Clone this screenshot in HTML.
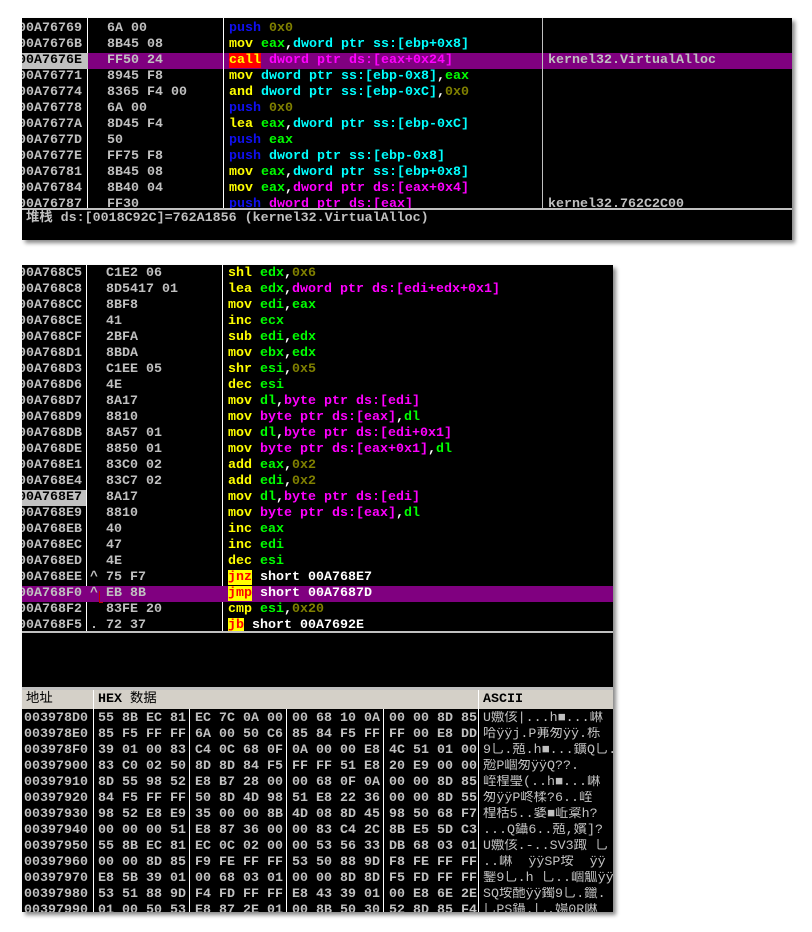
<!DOCTYPE html>
<html><head><meta charset="utf-8"><style>
body{margin:0;width:812px;height:932px;background:#fff;position:relative;overflow:hidden;font-family:"Liberation Mono","Noto Sans CJK SC",monospace;font-weight:bold;font-size:13.33px}
.win{position:absolute;background:#000;overflow:hidden;box-shadow:3px 3px 4px #888}
.r{position:absolute;left:0;right:0;height:16px;line-height:16px;white-space:pre;color:#c0c0c0}
.r span{position:absolute;top:0}
.vl{position:absolute;width:1px;background:#fff}
.y{color:#ffff00}.b{color:#1010f0}.g{color:#00ff00}.c{color:#00ffff}.m{color:#ff00ff}.o{color:#808000}.w{color:#fff}
.j{color:#ff0000;background:#ffff00}
.sel{background:#800080}
.hd{position:absolute;background:#d4d0c8;color:#000;height:19px;line-height:19px;white-space:pre}
</style></head><body>

<div class="win" style="left:22px;top:18px;width:770px;height:222px">
 <div class="vl" style="left:65px;top:0;height:191px"></div>
 <div class="vl" style="left:201px;top:0;height:191px"></div>
 <div class="vl" style="left:520px;top:0;height:191px;background:#c0c0c0"></div>
 <div class="r" style="top:3px"><span style="left:-4px">00A76769</span><span style="left:85px">6A 00</span><span style="left:207px"><b class="b">push</b> <b class="o">0x0</b></span></div>
 <div class="r" style="top:19px"><span style="left:-4px">00A7676B</span><span style="left:85px">8B45 08</span><span style="left:207px"><b class="y">mov</b> <b class="g">eax</b><b class="w">,</b><b class="c">dword ptr ss:[ebp+0x8]</b></span></div>
 <div class="r" style="top:35px"><span style="left:0;width:66px;height:16px;background:#c0c0c0"></span><span style="left:-4px;color:#000">00A7676E</span><span class="sel" style="left:66px;width:135px;height:16px"></span><span class="sel" style="left:202px;width:318px;height:16px"></span><span class="sel" style="left:521px;width:249px;height:16px"></span><span style="left:85px">FF50 24</span><span style="left:207px"><b style="background:#ff0000;color:#ffff00">call</b> <b class="m">dword ptr ds:[eax+0x24]</b></span><span style="left:526px">kernel32.VirtualAlloc</span></div>
 <div class="r" style="top:51px"><span style="left:-4px">00A76771</span><span style="left:85px">8945 F8</span><span style="left:207px"><b class="y">mov</b> <b class="c">dword ptr ss:[ebp-0x8]</b><b class="w">,</b><b class="g">eax</b></span></div>
 <div class="r" style="top:67px"><span style="left:-4px">00A76774</span><span style="left:85px">8365 F4 00</span><span style="left:207px"><b class="y">and</b> <b class="c">dword ptr ss:[ebp-0xC]</b><b class="w">,</b><b class="o">0x0</b></span></div>
 <div class="r" style="top:83px"><span style="left:-4px">00A76778</span><span style="left:85px">6A 00</span><span style="left:207px"><b class="b">push</b> <b class="o">0x0</b></span></div>
 <div class="r" style="top:99px"><span style="left:-4px">00A7677A</span><span style="left:85px">8D45 F4</span><span style="left:207px"><b class="y">lea</b> <b class="g">eax</b><b class="w">,</b><b class="c">dword ptr ss:[ebp-0xC]</b></span></div>
 <div class="r" style="top:115px"><span style="left:-4px">00A7677D</span><span style="left:85px">50</span><span style="left:207px"><b class="b">push</b> <b class="g">eax</b></span></div>
 <div class="r" style="top:131px"><span style="left:-4px">00A7677E</span><span style="left:85px">FF75 F8</span><span style="left:207px"><b class="b">push</b> <b class="c">dword ptr ss:[ebp-0x8]</b></span></div>
 <div class="r" style="top:147px"><span style="left:-4px">00A76781</span><span style="left:85px">8B45 08</span><span style="left:207px"><b class="y">mov</b> <b class="g">eax</b><b class="w">,</b><b class="c">dword ptr ss:[ebp+0x8]</b></span></div>
 <div class="r" style="top:163px"><span style="left:-4px">00A76784</span><span style="left:85px">8B40 04</span><span style="left:207px"><b class="y">mov</b> <b class="g">eax</b><b class="w">,</b><b class="m">dword ptr ds:[eax+0x4]</b></span></div>
 <div class="r" style="top:179px"><span style="left:-4px">00A76787</span><span style="left:85px">FF30</span><span style="left:207px"><b class="b">push</b> <b class="m">dword ptr ds:[eax]</b></span><span style="left:526px">kernel32.762C2C00</span></div>
 <div style="position:absolute;left:0;right:0;top:190px;height:2px;background:#c0c0c0"></div>
 <div class="r" style="top:192px;height:17px;line-height:17px"><span style="left:4px">堆栈 ds:[0018C92C]=762A1856 (kernel32.VirtualAlloc)</span></div>
</div>

<div class="win" style="left:22px;top:265px;width:591px;height:647px">
 <div class="vl" style="left:64px;top:0;height:366px"></div>
 <div class="vl" style="left:200px;top:0;height:366px"></div>
 <div id="d"></div>
 <div style="position:absolute;left:0;right:0;top:366px;height:2px;background:#c0c0c0"></div>
 <div style="position:absolute;left:0;right:0;top:422px;height:3px;background:#c0c0c0"></div>
 <div class="hd" style="left:0;top:425px;width:70px;padding-left:4px;font-weight:normal">地址</div>
 <div class="hd" style="left:72px;top:425px;width:383px;padding-left:4px">HEX <span style="font-weight:normal">数据</span></div>
 <div class="hd" style="left:457px;top:425px;width:134px;padding-left:4px">ASCII</div>
 <div class="vl" style="left:71px;top:425px;height:222px"></div>
 <div class="vl" style="left:456px;top:425px;height:222px"></div>
 <div class="vl" style="left:167px;top:444px;height:203px"></div>
 <div class="vl" style="left:264px;top:444px;height:203px"></div>
 <div class="vl" style="left:361px;top:444px;height:203px"></div>
 <div id="h"></div>
</div>

<script>
var D=[
["00A768C5","","C1E2 06",'<b class="y">shl</b> <b class="g">edx</b><b class="w">,</b><b class="o">0x6</b>'],
["00A768C8","","8D5417 01",'<b class="y">lea</b> <b class="g">edx</b><b class="w">,</b><b class="m">dword ptr ds:[edi+edx+0x1]</b>'],
["00A768CC","","8BF8",'<b class="y">mov</b> <b class="g">edi</b><b class="w">,</b><b class="g">eax</b>'],
["00A768CE","","41",'<b class="y">inc</b> <b class="g">ecx</b>'],
["00A768CF","","2BFA",'<b class="y">sub</b> <b class="g">edi</b><b class="w">,</b><b class="g">edx</b>'],
["00A768D1","","8BDA",'<b class="y">mov</b> <b class="g">ebx</b><b class="w">,</b><b class="g">edx</b>'],
["00A768D3","","C1EE 05",'<b class="y">shr</b> <b class="g">esi</b><b class="w">,</b><b class="o">0x5</b>'],
["00A768D6","","4E",'<b class="y">dec</b> <b class="g">esi</b>'],
["00A768D7","","8A17",'<b class="y">mov</b> <b class="g">dl</b><b class="w">,</b><b class="m">byte ptr ds:[edi]</b>'],
["00A768D9","","8810",'<b class="y">mov</b> <b class="m">byte ptr ds:[eax]</b><b class="w">,</b><b class="g">dl</b>'],
["00A768DB","","8A57 01",'<b class="y">mov</b> <b class="g">dl</b><b class="w">,</b><b class="m">byte ptr ds:[edi+0x1]</b>'],
["00A768DE","","8850 01",'<b class="y">mov</b> <b class="m">byte ptr ds:[eax+0x1]</b><b class="w">,</b><b class="g">dl</b>'],
["00A768E1","","83C0 02",'<b class="y">add</b> <b class="g">eax</b><b class="w">,</b><b class="o">0x2</b>'],
["00A768E4","","83C7 02",'<b class="y">add</b> <b class="g">edi</b><b class="w">,</b><b class="o">0x2</b>'],
["00A768E7","","8A17",'<b class="y">mov</b> <b class="g">dl</b><b class="w">,</b><b class="m">byte ptr ds:[edi]</b>'],
["00A768E9","","8810",'<b class="y">mov</b> <b class="m">byte ptr ds:[eax]</b><b class="w">,</b><b class="g">dl</b>'],
["00A768EB","","40",'<b class="y">inc</b> <b class="g">eax</b>'],
["00A768EC","","47",'<b class="y">inc</b> <b class="g">edi</b>'],
["00A768ED","","4E",'<b class="y">dec</b> <b class="g">esi</b>'],
["00A768EE","^","75 F7",'<b class="j">jnz</b> <b class="w">short 00A768E7</b>'],
["00A768F0","^","EB 8B",'<b class="j">jmp</b> <b class="w">short 00A7687D</b>'],
["00A768F2","","83FE 20",'<b class="y">cmp</b> <b class="g">esi</b><b class="w">,</b><b class="o">0x20</b>'],
["00A768F5",".","72 37",'<b class="j">jb</b> <b class="w">short 00A7692E</b>']];
var s="";
D.forEach(function(r,i){var t=1+i*16;var x="";
if(i==14)x='<span style="left:0;width:64px;height:16px;background:#c0c0c0"></span>';
if(i==20)x='<span class="sel" style="left:0;width:591px;height:16px"></span>';
var ac=i==14?'color:#000;':'';
s+='<div class="r" style="top:'+t+'px">'+x+'<span style="left:-4px;'+ac+'">'+r[0]+'</span><span style="left:68px">'+r[1]+'</span><span style="left:84px">'+r[2]+'</span><span style="left:206px">'+r[3]+'</span></div>';});
s+='<div style="position:absolute;left:77px;top:326px;width:1px;height:12px;background:#c00000"></div><div style="position:absolute;left:77px;top:337px;width:4px;height:1px;background:#c00000"></div>';
document.getElementById("d").innerHTML=s;
var H=[
["003978D0","55 8B EC 81","EC 7C 0A 00","00 68 10 0A","00 00 8D 85","U嫐侅|...h■...崊"],
["003978E0","85 F5 FF FF","6A 00 50 C6","85 84 F5 FF","FF 00 E8 DD","哈ÿÿj.P茀匆ÿÿ.栎"],
["003978F0","39 01 00 83","C4 0C 68 0F","0A 00 00 E8","4C 51 01 00","9乚.兡.h■...鑛Q乚."],
["00397900","83 C0 02 50","8D 8D 84 F5","FF FF 51 E8","20 E9 00 00","兝P崓匆ÿÿQ??."],
["00397910","8D 55 98 52","E8 B7 28 00","00 68 0F 0A","00 00 8D 85","峌楻璺(..h■...崊"],
["00397920","84 F5 FF FF","50 8D 4D 98","51 E8 22 36","00 00 8D 55","匆ÿÿP峂楺?6..峌"],
["00397930","98 52 E8 E9","35 00 00 8B","4D 08 8D 45","98 50 68 F7","楻栝5..婱■岴楶h?"],
["00397940","00 00 00 51","E8 87 36 00","00 83 C4 2C","8B E5 5D C3","...Q鑷6..兡,嬪]?"],
["00397950","55 8B EC 81","EC 0C 02 00","00 53 56 33","DB 68 03 01","U嫐侅.-..SV3踙 乚"],
["00397960","00 00 8D 85","F9 FE FF FF","53 50 88 9D","F8 FE FF FF","..崊  ÿÿSP垵  ÿÿ"],
["00397970","E8 5B 39 01","00 68 03 01","00 00 8D 8D","F5 FD FF FF","鑋9乚.h 乚..崓觚ÿÿ"],
["00397980","53 51 88 9D","F4 FD FF FF","E8 43 39 01","00 E8 6E 2E","SQ垵酏ÿÿ鐲9乚.鑞."],
["00397990","01 00 50 53","E8 87 2E 01","00 8B 50 30","52 8D 85 F4","乚PS鑷.乚.婸0R崊"]];
s="";
H.forEach(function(r,i){var t=446+i*16;
s+='<div class="r" style="top:'+t+'px"><span style="left:2px">'+r[0]+'</span><span style="left:76px">'+r[1]+'</span><span style="left:173px">'+r[2]+'</span><span style="left:270px">'+r[3]+'</span><span style="left:367px">'+r[4]+'</span><span style="left:461px;font-weight:normal;width:130px;overflow:hidden;height:16px">'+r[5]+'</span></div>';});
document.getElementById("h").innerHTML=s;
</script>
</body></html>
